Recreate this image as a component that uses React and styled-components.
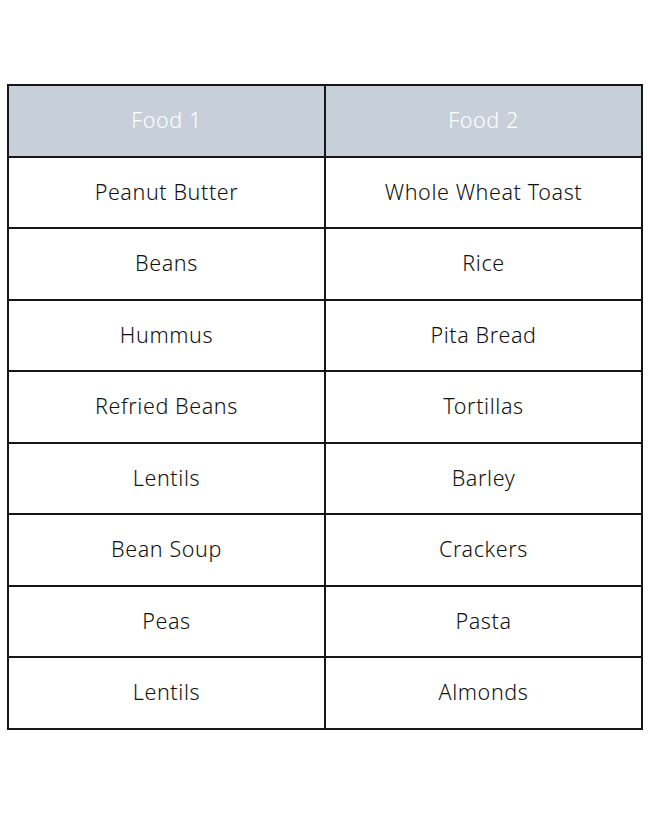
import styled, { createGlobalStyle } from "styled-components";

const GlobalStyle = createGlobalStyle`
  html, body {
    margin: 0;
    padding: 0;
    background: #ffffff;
  }
  body {
    font-family: "Noto Sans", "Liberation Sans", sans-serif;
  }
`;

const Page = styled.div`
  width: 650px;
  height: 813px;
  padding: 84px 0 0 7px;
  box-sizing: border-box;
`;

const Table = styled.table`
  width: 636px;
  border-collapse: collapse;
  table-layout: fixed;
`;

const Row = styled.tr`
  height: 71.5px;
`;

const HeadCell = styled.th`
  border: 2px solid #161616;
  background: #c7d0d9;
  color: #ffffff;
  font-weight: 300;
  font-size: 21.5px;
  letter-spacing: 0.6px;
  text-align: center;
  vertical-align: middle;
  padding: 0 0 2px;
`;

const Cell = styled.td`
  border: 2px solid #161616;
  color: #111111;
  font-weight: 300;
  font-size: 21.5px;
  letter-spacing: 0.6px;
  text-align: center;
  vertical-align: middle;
  padding: 0 0 2px;
`;

const pairs = [
  ["Peanut Butter", "Whole Wheat Toast"],
  ["Beans", "Rice"],
  ["Hummus", "Pita Bread"],
  ["Refried Beans", "Tortillas"],
  ["Lentils", "Barley"],
  ["Bean Soup", "Crackers"],
  ["Peas", "Pasta"],
  ["Lentils", "Almonds"],
];

const App = () => {
  return (
    <>
      <GlobalStyle />
      <Page>
        <Table>
          <thead>
            <Row>
              <HeadCell>Food 1</HeadCell>
              <HeadCell>Food 2</HeadCell>
            </Row>
          </thead>
          <tbody>
            {pairs.map(([a, b], i) => (
              <Row key={i}>
                <Cell>{a}</Cell>
                <Cell>{b}</Cell>
              </Row>
            ))}
          </tbody>
        </Table>
      </Page>
    </>
  );
};

export default App;
